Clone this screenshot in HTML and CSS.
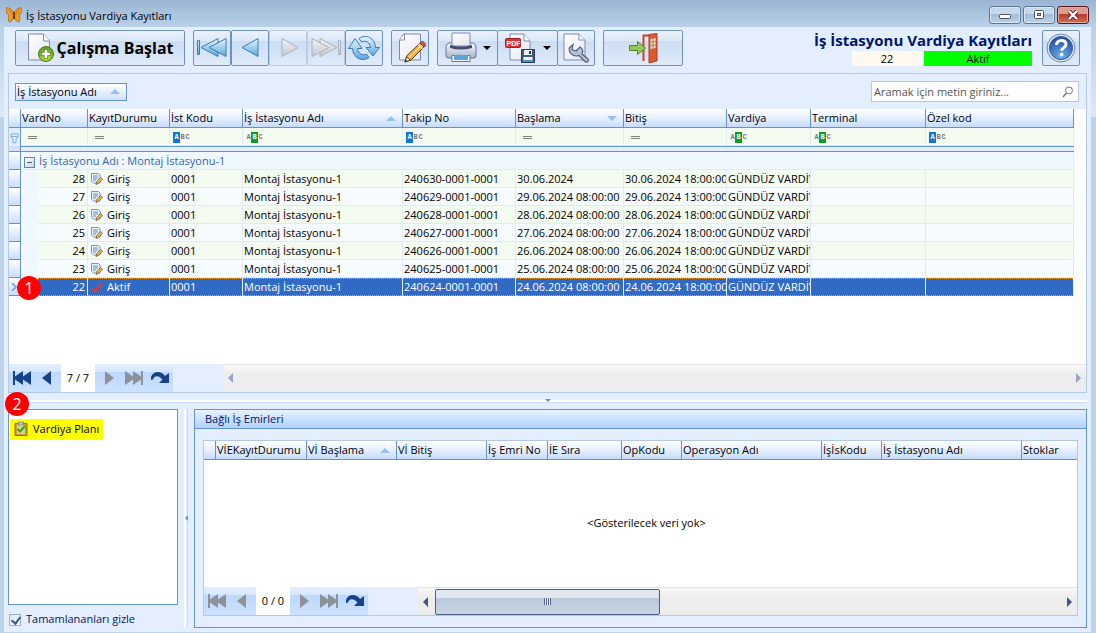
FILE: index.html
```html
<!DOCTYPE html>
<html lang="tr">
<head>
<meta charset="utf-8">
<title>İş İstasyonu Vardiya Kayıtları</title>
<link rel="stylesheet" href="styles.css">
</head>
<body>
<svg class="defs" aria-hidden="true">
  <defs>
    <linearGradient id="blue" x1="0" y1="0" x2="0" y2="1"><stop offset="0" stop-color="#e9f6fd"/><stop offset="1" stop-color="#58a9df"/></linearGradient>
    <linearGradient id="gray" x1="0" y1="0" x2="0" y2="1"><stop offset="0" stop-color="#f1f3f7"/><stop offset="1" stop-color="#c3c8d0"/></linearGradient>
    <linearGradient id="paper" x1="0" y1="0" x2="1" y2="1"><stop offset="0" stop-color="#ffffff"/><stop offset="1" stop-color="#e4e6f3"/></linearGradient>
    <linearGradient id="metal" x1="0" y1="0" x2="0" y2="1"><stop offset="0" stop-color="#f8f9fc"/><stop offset="1" stop-color="#a9b3c9"/></linearGradient>
    <radialGradient id="ball" cx=".5" cy=".9" r=".8"><stop offset="0" stop-color="#6fb0ee"/><stop offset="1" stop-color="#2a56a4"/></radialGradient>
    <radialGradient id="lime" cx=".5" cy=".8" r=".8"><stop offset="0" stop-color="#b6e04a"/><stop offset="1" stop-color="#5c9a1c"/></radialGradient>
  </defs>
  <symbol id="i-note" viewBox="0 0 12 12">
    <path d="M.5.5h7l1.500 1.500v8H2.500l-2-2z" fill="#eaf3fc" stroke="#6f9ac9"/>
    <path d="M2 3h5M2 5h5M2 7h3" stroke="#5b8cc4"/>
    <path d="M5 11.500l.7-3 4-4 1.800 1.800-4 4z" fill="#f0b64e" stroke="#7a5330" stroke-width=".8"/>
  </symbol>
  <symbol id="i-first" viewBox="0 0 20 16"><path d="M1 1h2v5.500L11 1v5.500L19 1v14l-8-5.500V15L3 9.500V15H1z"/></symbol>
  <symbol id="i-prev" viewBox="0 0 20 16"><path d="M13 1v14L4 8z"/></symbol>
  <symbol id="i-next" viewBox="0 0 20 16"><path d="M7 1v14l9-7z"/></symbol>
  <symbol id="i-last" viewBox="0 0 20 16"><path d="M19 1h-2v5.500L9 1v5.500L1 1v14l8-5.500V15l8-5.500V15h2z"/></symbol>
  <symbol id="i-redo" viewBox="0 0 20 16"><path d="M1 7C3 1 11 0 15 6l4-3v10H9l3.500-3.500C9 5 4 5 3 9.500L1 10z"/></symbol>
</svg>

<div class="window">
  <header class="titlebar">
    <svg class="logo" width="16" height="16" viewBox="0 0 16 16"><path d="M8 6C6 2 2 0 0 1c0 4 1 6 3 7-1 2-1 4 0 7 3 0 4-3 5-6 1 3 2 6 5 6 1-3 1-5 0-7 2-1 3-3 3-7-2-1-6 1-8 5z" fill="#f79a1c" stroke="#8a5716" stroke-width=".6"/><path d="M8 5v7" stroke="#3b2a1a" stroke-width="1.500"/><path d="M3 3l4 5M13 3L9 8" stroke="#b5650f" stroke-width=".7"/></svg>
    <span class="title">İş İstasyonu Vardiya Kayıtları</span>
    <button class="winbtn" aria-label="Simge durumuna küçült"><svg width="12" height="10" viewBox="0 0 12 10"><rect x=".5" y="4.500" width="11" height="4" rx="1" fill="#fff" stroke="#4b5563"/></svg></button>
    <button class="winbtn" aria-label="Ekranı kapla"><svg width="12" height="10" viewBox="0 0 12 10"><rect x="1.500" y=".5" width="9" height="8" rx="1" fill="#fff" stroke="#4b5563"/><rect x="4.500" y="3.500" width="3" height="2" fill="#a9c4e0" stroke="#4b5563"/></svg></button>
    <button class="winbtn close" aria-label="Kapat"><svg width="12" height="10" viewBox="0 0 12 10"><path d="M2 1l8 8M10 1L2 9" stroke="#5d2430" stroke-width="4"/><path d="M2 1l8 8M10 1L2 9" stroke="#fff" stroke-width="2.200"/></svg></button>
  </header>

  <main class="client">
    <div class="toolbar">
      <button class="tool start">
        <svg width="28" height="32" viewBox="0 0 28 32"><path d="M1.500 2h15l6 7v19h-21z" fill="url(#paper)" stroke="#7d86bd"/><path d="M16.500 2v7h6" fill="#fff" stroke="#7d86bd"/><circle cx="19" cy="22" r="7.500" fill="url(#lime)" stroke="#4d7a1e"/><path d="M19 17.500v9M14.500 22h9" stroke="#4d7a1e" stroke-width="4"/><path d="M19 18v8M15 22h8" stroke="#fff" stroke-width="2.600"/></svg>
        <span>Çalışma Başlat</span>
      </button>
      <div class="set">
        <button class="tool" aria-label="İlk kayıt"><svg width="32" height="24" viewBox="0 0 32 24"><g fill="url(#blue)" stroke="#3c78b8"><path d="M1.500 4.500h2v14h-2zM22 2.500v18L5 11.500z"/><path d="M30 2.500v18L13 11.500z"/></g></svg></button>
        <button class="tool" aria-label="Önceki kayıt"><svg width="32" height="24" viewBox="0 0 32 24"><path d="M24 2.500v18L8 11.500z" fill="url(#blue)" stroke="#3c78b8"/></svg></button>
        <button class="tool off" disabled aria-label="Sonraki kayıt"><svg width="32" height="24" viewBox="0 0 32 24"><path d="M10 2.500v18L26 11.500z" fill="url(#gray)" stroke="#abb0b8"/></svg></button>
        <button class="tool off" disabled aria-label="Son kayıt"><svg width="32" height="24" viewBox="0 0 32 24"><g fill="url(#gray)" stroke="#abb0b8"><path d="M28.500 4.500h2v14h-2zM10 2.500v18l17-9z"/><path d="M2 2.500v18l17-9z"/></g></svg></button>
        <button class="tool" aria-label="Yenile"><svg width="34" height="28" viewBox="0 0 34 28"><g fill="url(#blue)" stroke="#3c78b8"><path d="M12 4.500C19-.5 28 4 28.500 13.500h4L26 22l-7-8.500h4.500C23 8 18 6 14.500 8z"/><path d="M22 23.500C15 28.500 6 24 5.500 14.500h-4L8 4.500l7 10h-4.500C11 20 16 22 19.500 20z"/></g></svg></button>
      </div>
      <button class="tool" aria-label="Düzenle"><svg width="32" height="32" viewBox="0 0 32 32"><path d="M9.500 2h17v26h-21V8z" fill="url(#paper)" stroke="#7d86bd"/><path d="M10.500 2v6h-5" fill="#fff" stroke="#7d86bd"/><path d="M11 29.500l2-6L26 11l4 4-13 13z" fill="#f7a928" stroke="#594034"/><path d="M14.500 26L28 13" stroke="#ffe18a" stroke-width="1.500"/><path d="M26 11l2.500-2 4 4L30 15z" fill="#cf5648" stroke="#594034" stroke-width=".8"/><path d="M24.500 12.500l4 4" stroke="#ccd4df" stroke-width="2"/><path d="M11 30l1.500-5.500 4 3.700z" fill="#f7dcb8" stroke="#594034"/><path d="M10.500 30.500l1-3 2.300 2z" fill="#37363c"/></svg></button>
      <div class="set joined">
        <button class="tool split" aria-label="Yazdır"><svg width="32" height="32" viewBox="0 0 32 32"><path d="M1 15q0-3 3-4h24q3 1 3 4v9q0 2-2 2H3q-2 0-2-2z" fill="url(#metal)" stroke="#62739c"/><path d="M7 1h18v13H7z" fill="url(#paper)" stroke="#7d86bd"/><path d="M5 13q11 3 22 0v3q-11 3-22 0z" fill="#414e6c"/><path d="M7 23.500h18v6H7z" fill="#fff" stroke="#62739c"/><path d="M9 23h14v5H9z" fill="#55a6df"/></svg><i class="drop"></i></button>
        <button class="tool split" aria-label="PDF olarak kaydet"><svg width="32" height="32" viewBox="0 0 32 32"><path d="M5 2h14l6 7v19H5z" fill="url(#paper)" stroke="#7d86bd"/><path d="M19 2v7h6" fill="#fff" stroke="#7d86bd"/><rect x=".5" y="6.500" width="15" height="9" rx="1" fill="#d8363b" stroke="#a62028"/><text x="1.500" y="14" class="pdf">PDF</text><path d="M16.500 17.500h13v13h-13z" fill="#48597c" stroke="#2d3952"/><path d="M19 18h8v5h-8zM18.500 25h9v5h-9z" fill="#edf1f8"/><path d="M24 19h2v3h-2z" fill="#26334f"/><path d="M18.500 28h9v2h-9z" fill="#3f96d4"/></svg><i class="drop"></i></button>
        <button class="tool" aria-label="Ayarlar"><svg width="32" height="32" viewBox="0 0 32 32"><path d="M4 2h15l6 6v20H4z" fill="url(#paper)" stroke="#7d86bd"/><path d="M19 2v6h6" fill="#fff" stroke="#7d86bd"/><path d="M13 12.500l-1 5 4 1.500 4-4c3 2 3 5 2 7l6 5c1.500 2-1 4-3 2.500l-6-6c-6 2-11-3-9.500-8z" fill="#b8c2d3" stroke="#505d78" stroke-width="1.200"/></svg></button>
      </div>
      <button class="tool exit" aria-label="Çıkış"><svg width="32" height="34" viewBox="0 0 32 34"><path d="M16.500 30V4.500H24" fill="none" stroke="#c4452b" stroke-width="2"/><path d="M22 3.500l8-1V30l-8 2z" fill="#dc5a30" stroke="#b33c22"/><path d="M23.500 8l5-1v10l-5 1z" fill="#f6e2c4"/><path d="M26 7v11M23.500 11l5-.5M23.500 14.500l5-.5" stroke="#996644" stroke-width=".8"/><path d="M2.500 14.500h8v-4l8 6.500-8 6.500v-4h-8z" fill="#95c85b" stroke="#4f8a2c"/></svg></button>
      <div class="summary">
        <h1>İş İstasyonu Vardiya Kayıtları</h1>
        <div class="state"><span class="no">22</span><span class="active">Aktif</span></div>
      </div>
      <button class="tool" aria-label="Yardım"><svg width="32" height="32" viewBox="0 0 32 32"><circle cx="16" cy="16" r="14" fill="#d9e2f0" stroke="#7386a9"/><circle cx="16" cy="16" r="11.500" fill="url(#ball)" stroke="#305b9c"/><path d="M11.500 13c0-6 9.500-6 9.500-.7 0 3.200-4.300 3.400-4.300 6.500" fill="none" stroke="#fff" stroke-width="3"/><circle cx="16.600" cy="22.500" r="1.900" fill="#fff"/></svg></button>
    </div>

    <section class="panel shifts">
      <div class="groupbar">
        <button class="groupby">İş İstasyonu Adı<i class="up"></i></button>
        <label class="search"><input type="text" placeholder="Aramak için metin giriniz..." aria-label="Ara"><svg width="12" height="12" viewBox="0 0 12 12"><circle cx="7" cy="4.500" r="3.500" fill="none" stroke="#777"/><path d="M4.500 7L1 11" stroke="#777" stroke-width="1.500"/></svg></label>
      </div>
      <div class="body">
        <table class="grid main">
          <colgroup><col class="w12"><col class="w17"><col class="w50"><col class="w82"><col class="w73"><col class="w160"><col class="w113"><col class="w108"><col class="w103"><col class="w84"><col class="w115"><col></colgroup>
          <thead>
            <tr><th></th><th colspan="2">VardNo</th><th>KayıtDurumu</th><th>İst Kodu</th><th class="sort">İş İstasyonu Adı<i class="up"></i></th><th>Takip No</th><th class="sort">Başlama<i class="down"></i></th><th>Bitiş</th><th>Vardiya</th><th>Terminal</th><th>Özel kod</th></tr>
          </thead>
          <tbody>
            <tr class="filter"><td class="ind"><svg width="9" height="11" viewBox="0 0 9 11"><path d="M1 1h7v3L6 6v3.500L3 10V6L1 4zM1 3.500h7" fill="#e4f0ff" stroke="#7eaee6"/></svg></td><td colspan="2"><i class="eq"></i></td><td><i class="eq"></i></td><td><span class="abc a"><b>A</b><b>B</b><b>C</b></span></td><td><span class="abc b"><b>A</b><b>B</b><b>C</b></span></td><td><span class="abc a"><b>A</b><b>B</b><b>C</b></span></td><td><i class="eq"></i></td><td><i class="eq"></i></td><td><span class="abc b"><b>A</b><b>B</b><b>C</b></span></td><td><span class="abc b"><b>A</b><b>B</b><b>C</b></span></td><td><span class="abc a"><b>A</b><b>B</b><b>C</b></span></td></tr>
            <tr class="gap"><td class="ind"></td><td colspan="11"></td></tr>
            <tr class="group"><td class="ind"></td><td colspan="11"><button class="fold" aria-label="Grubu daralt"></button><span>İş İstasyonu Adı : Montaj İstasyonu-1</span></td></tr>
            <tr class="odd"><td class="ind"></td><td class="indent"></td><td class="num">28</td><td><svg class="st"><use href="#i-note"/></svg>Giriş</td><td>0001</td><td>Montaj İstasyonu-1</td><td>240630-0001-0001</td><td>30.06.2024</td><td><div class="clip">30.06.2024 18:00:00</div></td><td><div class="clip">GÜNDÜZ VARDİY</div></td><td></td><td></td></tr>
            <tr><td class="ind"></td><td class="indent"></td><td class="num">27</td><td><svg class="st"><use href="#i-note"/></svg>Giriş</td><td>0001</td><td>Montaj İstasyonu-1</td><td>240629-0001-0001</td><td>29.06.2024 08:00:00</td><td><div class="clip">29.06.2024 13:00:00</div></td><td><div class="clip">GÜNDÜZ VARDİY</div></td><td></td><td></td></tr>
            <tr class="odd"><td class="ind"></td><td class="indent"></td><td class="num">26</td><td><svg class="st"><use href="#i-note"/></svg>Giriş</td><td>0001</td><td>Montaj İstasyonu-1</td><td>240628-0001-0001</td><td>28.06.2024 08:00:00</td><td><div class="clip">28.06.2024 18:00:00</div></td><td><div class="clip">GÜNDÜZ VARDİY</div></td><td></td><td></td></tr>
            <tr><td class="ind"></td><td class="indent"></td><td class="num">25</td><td><svg class="st"><use href="#i-note"/></svg>Giriş</td><td>0001</td><td>Montaj İstasyonu-1</td><td>240627-0001-0001</td><td>27.06.2024 08:00:00</td><td><div class="clip">27.06.2024 18:00:00</div></td><td><div class="clip">GÜNDÜZ VARDİY</div></td><td></td><td></td></tr>
            <tr class="odd"><td class="ind"></td><td class="indent"></td><td class="num">24</td><td><svg class="st"><use href="#i-note"/></svg>Giriş</td><td>0001</td><td>Montaj İstasyonu-1</td><td>240626-0001-0001</td><td>26.06.2024 08:00:00</td><td><div class="clip">26.06.2024 18:00:00</div></td><td><div class="clip">GÜNDÜZ VARDİY</div></td><td></td><td></td></tr>
            <tr><td class="ind"></td><td class="indent"></td><td class="num">23</td><td><svg class="st"><use href="#i-note"/></svg>Giriş</td><td>0001</td><td>Montaj İstasyonu-1</td><td>240625-0001-0001</td><td>25.06.2024 08:00:00</td><td><div class="clip">25.06.2024 18:00:00</div></td><td><div class="clip">GÜNDÜZ VARDİY</div></td><td></td><td></td></tr>
            <tr class="sel"><td class="ind"><svg width="7" height="8" viewBox="0 0 7 8"><path d="M1 0l4 4-4 4" fill="none" stroke="#7fb0ec" stroke-width="2"/></svg><span class="badge">1</span></td><td class="indent"></td><td class="num">22</td><td><svg class="st" viewBox="0 0 12 12"><path d="M1 7l3 3.500L11 2" fill="none" stroke="#e03a36" stroke-width="2.200"/></svg>Aktif</td><td>0001</td><td>Montaj İstasyonu-1</td><td>240624-0001-0001</td><td>24.06.2024 08:00:00</td><td><div class="clip">24.06.2024 18:00:00</div></td><td><div class="clip">GÜNDÜZ VARDİY</div></td><td></td><td></td></tr>
          </tbody>
        </table>
      </div>
      <div class="footer">
        <nav class="pager"><button aria-label="İlk"><svg><use href="#i-first"/></svg></button><button aria-label="Önceki"><svg><use href="#i-prev"/></svg></button><span>7 / 7</span><button disabled aria-label="Sonraki"><svg><use href="#i-next"/></svg></button><button disabled aria-label="Son"><svg><use href="#i-last"/></svg></button><button aria-label="Yenile"><svg><use href="#i-redo"/></svg></button></nav>
        <div class="scroll idle"><i class="left"></i><i class="right"></i></div>
      </div>
    </section>

    <div class="hsplit"><i></i></div>

    <div class="lower">
      <aside class="side">
        <div class="list"><span class="badge">2</span>
          <a href="#plan" class="item"><svg width="14" height="16" viewBox="0 0 14 16"><path d="M1 2.500h12v12H1z" fill="#d69a34" stroke="#9c6a1a"/><path d="M3 4h8v9H3z" fill="#c5d98a"/><path d="M4.500 1h5v3h-5z" fill="#b9bec4" stroke="#777" stroke-width=".6"/><path d="M3.500 8L6 10.500l5-5.500" fill="none" stroke="#4c9b28" stroke-width="2"/></svg>Vardiya Planı</a>
        </div>
        <label class="hide"><input type="checkbox" checked>Tamamlananları gizle</label>
      </aside>
      <div class="vsplit"><i></i></div>
      <section class="orders" id="plan">
        <h2>Bağlı İş Emirleri</h2>
        <div class="inner">
          <div class="panel">
            <div class="body empty">
              <table class="grid">
                <colgroup><col class="w12"><col class="w91"><col class="w90"><col class="w90"><col class="w61"><col class="w74"><col class="w60"><col class="w140"><col class="w60"><col class="w140"><col></colgroup>
                <thead><tr><th></th><th>VİEKayıtDurumu</th><th class="sort">Vİ Başlama<i class="up"></i></th><th>Vİ Bitiş</th><th>İş Emri No</th><th>İE Sıra</th><th>OpKodu</th><th>Operasyon Adı</th><th>İşİsKodu</th><th>İş İstasyonu Adı</th><th class="end">Stoklar</th></tr></thead>
              </table>
              <p>&lt;Gösterilecek veri yok&gt;</p>
            </div>
            <div class="footer">
              <nav class="pager"><button disabled aria-label="İlk"><svg><use href="#i-first"/></svg></button><button disabled aria-label="Önceki"><svg><use href="#i-prev"/></svg></button><span>0 / 0</span><button disabled aria-label="Sonraki"><svg><use href="#i-next"/></svg></button><button disabled aria-label="Son"><svg><use href="#i-last"/></svg></button><button aria-label="Yenile"><svg><use href="#i-redo"/></svg></button></nav>
              <div class="scroll"><i class="left"></i><div class="track"><div class="thumb"><i></i></div></div><i class="right"></i></div>
            </div>
          </div>
        </div>
      </section>
    </div>
  </main>
</div>
</body>
</html>
```
FILE: styles.css
```css
* { box-sizing: border-box; }
body { margin: 0; font: 11px/16px "Open Sans", "Noto Sans", sans-serif; color: #000; }
button, input { font: inherit; color: inherit; margin: 0; padding: 0; }
button svg { display: block; }
.defs { position: absolute; width: 0; height: 0; }

.window { display: flex; flex-direction: column; height: 100vh; min-height: 560px; padding: 0 5px 1px 4px; background: linear-gradient(#9bb5d2 0, #b9d1ea 27px, #dce9f6 117px, #bbd2ea 117px); }

.titlebar { display: flex; flex: none; align-items: center; gap: 2px; height: 27px; padding: 2px 2px 0 2px; }
.title { flex: 1; margin-left: 2px; padding-top: 2px; }
.winbtn { display: grid; place-items: center; width: 32px; height: 18px; border: 1px solid #5d7592; border-radius: 3px; background: linear-gradient(#c6d9ec 0 45%, #a2bcd7 45%, #b9d2e8); box-shadow: inset 0 0 0 1px #dbe8f4; }
.winbtn.close { border-color: #541824; background: linear-gradient(#dd9a90 0 45%, #b93a27 45%, #d0705a); box-shadow: inset 0 0 0 1px #e5aaa0; }

.client { display: flex; flex: 1; flex-direction: column; min-height: 0; padding: 3px 4px 4px; background: #e3efff; }

.toolbar { display: flex; flex: none; gap: 8px; height: 43px; padding: 0 7px; }
.toolbar .tool { display: flex; flex: none; align-items: center; justify-content: center; width: 38px; height: 36px; border: 1px solid #6f91bf; border-radius: 2px; background: linear-gradient(#eaf2fd 0, #dce9f9 28%, #cbdcf2 28%, #dfebfa); }
.toolbar .tool.off { border-color: #bdcbe0; }
.toolbar .start { gap: 2px; width: 170px; font-size: 16px; font-weight: 700; white-space: nowrap; }
.toolbar .split { gap: 6px; width: 61px; }
.toolbar .exit { width: 80px; }
.set { display: flex; }
.joined .tool + .tool { margin-left: -1px; }
.pdf { font: 700 7px "Liberation Sans", sans-serif; fill: #fff; }
.drop { border: 4px solid transparent; border-top-color: #000; border-bottom: 0; }
.summary { display: flex; flex: 1; flex-direction: column; align-items: flex-end; min-width: 0; margin-right: 2px; }
.summary h1 { margin: 0; font-size: 15px; line-height: 21px; color: #00156e; white-space: nowrap; }
.state { display: flex; gap: 2px; line-height: 15px; text-align: center; }
.no { width: 70px; background: #fff9ef; }
.active { width: 108px; background: #0f0; }

.panel { display: flex; flex-direction: column; min-height: 0; border: 1px solid #b3c8e4; background: #fff; }
.shifts { flex: 319 1 0; }
.groupbar { display: flex; flex: none; align-items: center; justify-content: space-between; height: 35px; padding: 0 7px 0 6px; background: #e3efff; }
.groupby { display: flex; align-items: center; justify-content: space-between; width: 112px; height: 18px; padding: 0 6px 0 1px; border: 1px solid #6593cf; background: linear-gradient(#fff, #cde1fd); }
.search { display: flex; align-items: center; width: 208px; height: 21px; padding: 0 4px 0 2px; border: 1px solid #b3c8e4; background: #fff; }
.search input { flex: 1; min-width: 0; border: 0; outline: 0; background: none; }
.search input::placeholder { color: #555; opacity: 1; }

.up, .down { display: block; flex: none; border: 5px solid transparent; }
.up { border-bottom-color: #96c0f5; border-top: 0; }
.down { border-top-color: #96c0f5; border-bottom: 0; }

.body { flex: 1; min-height: 0; overflow: hidden; }
.grid { width: 100%; table-layout: fixed; border-collapse: separate; border-spacing: 0; white-space: nowrap; }
.main { width: calc(100% - 12px); }
.grid th { position: relative; height: 19px; padding: 0 0 0 1px; border: solid #6593cf; border-width: 0 1px 1px 0; background: linear-gradient(#fff, #e8f1fe 45%, #c6dcfb); font-weight: 400; text-align: left; }
.grid th.end { border-right: 0; }
.grid th i { position: absolute; top: 7px; right: 6px; }
.grid td { height: 18px; padding: 0 0 0 1px; border: solid #e0ebfa; border-width: 0 1px 1px 0; background: #f5fbff; line-height: 16px; }
.grid .odd td { background: #f4fbf1; }
.grid td.ind { position: relative; padding: 0; border-color: #6593cf; background: linear-gradient(#fff, #c8defc); }
.grid td.indent { border-color: #f0f8ff; background: #f0f8ff; }
.grid td.num { padding-right: 2px; text-align: right; }
.grid .ind svg { display: block; margin: auto; }
.clip { overflow: hidden; }
.st { width: 12px; height: 12px; margin: 0 4px 0 2px; vertical-align: -2px; }
.grid .filter td { padding-top: 2px; background: #f4fbf1; }
.grid .filter td.ind { border-bottom: 0; background: #e1edfe; }
.grid .gap td { height: 6px; border-width: 1px 0; border-color: #6593cf; background: #e3efff; }
.grid .gap td.ind { border-width: 0 1px 1px 0; background: #cfe2fc; }
.grid .group td { color: #3764a8; }
.grid .group td:last-child { padding-left: 3px; background: #f0f8ff; }
.fold { display: inline-block; width: 11px; height: 11px; margin-right: 4px; border: 1px solid #6883a8; background: linear-gradient(#41597f, #41597f) center / 5px 1px no-repeat, linear-gradient(135deg, #fff, #c5d6ec); vertical-align: -2px; }
.eq { display: block; width: 9px; height: 3px; margin-left: 6px; border: solid #7d807d; border-width: 1px 0; }
.abc { display: flex; align-items: center; margin-left: 2px; font: 700 7px/11px "Liberation Mono", monospace; color: #777; }
.abc b { width: 5px; text-align: center; }
.abc.a b:first-child { width: 7px; background: #1276d8; color: #fff; }
.abc.b b:nth-child(2) { width: 7px; background: #07a01f; color: #fff; }
.grid .sel td { background: #316ac5; border-right-color: #e3efff; border-bottom: 1px dotted #f0a030; color: #fff; background-image: repeating-linear-gradient(90deg, #f0a030 0 1px, #316ac5 1px 2px); background-size: 100% 1px; background-repeat: no-repeat; }
.grid .sel td.ind { border-bottom: 1px solid #6593cf; border-right-color: #6593cf; background: linear-gradient(#fff, #c8defc); }
.grid .sel td.indent { border-color: #f0f8ff; background: #f0f8ff; }

.w12 { width: 12px; } .w17 { width: 17px; } .w50 { width: 50px; } .w60 { width: 60px; }
.w61 { width: 61px; } .w73 { width: 73px; } .w74 { width: 74px; } .w82 { width: 82px; }
.w84 { width: 84px; } .w90 { width: 90px; } .w91 { width: 91px; } .w103 { width: 103px; }
.w108 { width: 108px; } .w113 { width: 113px; } .w115 { width: 115px; } .w140 { width: 140px; } .w160 { width: 160px; }

.badge { position: absolute; z-index: 2; width: 24px; height: 24px; border-radius: 50%; background: #f00; color: #fff; font-size: 16px; line-height: 24px; text-align: center; }
.ind .badge { top: -2px; left: 8px; }
.list .badge { top: -18px; left: -4px; }

.footer { display: flex; flex: none; gap: 50px; height: 28px; background: #e3efff; }
.pager { display: flex; flex: none; background: linear-gradient(#e3efff 0, #d5e6fe 30%, #bdd8fd 30%, #cde1fe); }
.pager button { display: grid; place-items: center; width: 26px; border: 0; background: none; fill: #15428b; }
.pager button:disabled { fill: #8d9299; }
.pager svg { width: 20px; height: 16px; }
.pager span { width: 34px; background: #fff; line-height: 28px; text-align: center; }
.scroll { display: flex; flex: 1; align-items: center; justify-content: space-between; padding: 0 5px; border-top: 1px solid #e3e3e3; background: linear-gradient(#f8f8f8, #ededed 35%); }
.left, .right { border: 5px solid transparent; }
.left { border-right-color: #43557d; border-left: 0; }
.right { border-left-color: #43557d; border-right: 0; }
.idle .left { border-right-color: #98a7c8; }
.idle .right { border-left-color: #98a7c8; }
.track { flex: 1; margin: 0 7px; }
.thumb { display: grid; place-items: center; width: 36%; height: 26px; border: 1px solid #4b5f87; border-radius: 2px; background: linear-gradient(#e0e7ef 0 35%, #bac8da 35%, #c8d5e3); }
.thumb i { width: 7px; height: 7px; background: repeating-linear-gradient(90deg, #56678a 0 1px, #e4ebf4 1px 2px); }

.hsplit { display: flex; flex: none; align-items: center; height: 16px; background: linear-gradient(#fff, #fff) 0 7px / 100% 2px no-repeat, linear-gradient(#c6defb, #c6defb) 0 9px / 100% 1px no-repeat; }
.hsplit i { margin: auto; border: 3px solid transparent; border-top-color: #6593cf; border-bottom: 0; }
.lower { display: flex; flex: 220 1 0; min-height: 0; }
.side { display: flex; flex: none; flex-direction: column; width: 170px; }
.list { position: relative; flex: 1; padding: 9px 0 0 1px; border: 1px solid #6593cf; background: #fff; }
.item { display: inline-flex; align-items: center; gap: 5px; height: 21px; padding: 0 4px; background: #ff0; color: #000; text-decoration: none; }
.hide { display: flex; align-items: flex-end; gap: 5px; height: 23px; padding-bottom: 1px; color: #00156e; }
.hide input { appearance: none; width: 12px; height: 12px; margin: 0 0 1px 1px; border: 1px solid #9bb2d2; background: linear-gradient(135deg, #dce5f1, #fff); }
.hide input:checked::after { content: ""; display: block; width: 4px; height: 7px; margin: 0 0 0 3px; border: solid #36588f; border-width: 0 2px 2px 0; transform: rotate(38deg); }
.vsplit { display: flex; flex: none; align-items: center; width: 16px; background: linear-gradient(#fff, #fff) 6px 0 / 2px 100% no-repeat, linear-gradient(#c6defb, #c6defb) 9px 0 / 1px 100% no-repeat; }
.vsplit i { margin: auto; border: 3px solid transparent; border-right-color: #6593cf; border-left: 0; }
.orders { display: flex; flex: 1; flex-direction: column; min-width: 0; border: 1px solid #6593cf; }
.orders h2 { flex: none; height: 19px; margin: 0; padding: 0 10px; border-bottom: 1px solid #6593cf; background: linear-gradient(#e8f2ff, #afd2ff); color: #00156e; font-size: 11px; font-weight: 400; line-height: 18px; }
.inner { display: flex; flex: 1; min-height: 0; padding: 11px 8px; }
.inner .panel { flex: 1; min-width: 0; }
.empty { display: flex; flex-direction: column; }
.empty p { margin: auto; padding-left: 12px; }
```
